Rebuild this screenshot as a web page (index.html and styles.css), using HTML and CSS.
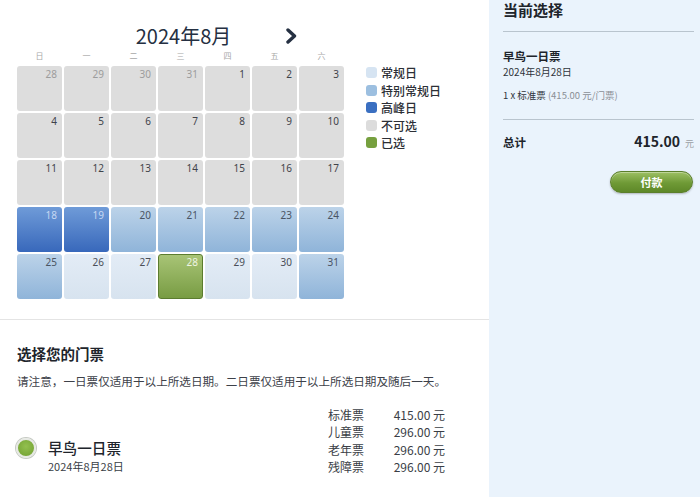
FILE: index.html
```html
<!DOCTYPE html>
<html lang="zh-CN">
<head>
<meta charset="utf-8">
<title>选择日期</title>
<link rel="stylesheet" href="styles.css">
</head>
<body>
<div class="page">
  <main class="main">
    <section class="cal-area">
      <div class="calendar">
        <div class="cal-head">
          <span></span>
          <span class="cal-title">2024年8月</span>
          <span class="next">
            <svg width="13" height="16" viewBox="0 0 13 16"><path d="M3 2 L9.5 8 L3 14" fill="none" stroke="#253042" stroke-width="3.4" stroke-linecap="round" stroke-linejoin="round"/></svg>
          </span>
        </div>
        <div class="weekdays">
          <span>日</span><span>一</span><span>二</span><span>三</span><span>四</span><span>五</span><span>六</span>
        </div>
        <div class="grid">
          <div class="cell off prev">28</div>
          <div class="cell off prev">29</div>
          <div class="cell off prev">30</div>
          <div class="cell off prev">31</div>
          <div class="cell off">1</div>
          <div class="cell off">2</div>
          <div class="cell off">3</div>
          <div class="cell off">4</div>
          <div class="cell off">5</div>
          <div class="cell off">6</div>
          <div class="cell off">7</div>
          <div class="cell off">8</div>
          <div class="cell off">9</div>
          <div class="cell off">10</div>
          <div class="cell off">11</div>
          <div class="cell off">12</div>
          <div class="cell off">13</div>
          <div class="cell off">14</div>
          <div class="cell off">15</div>
          <div class="cell off">16</div>
          <div class="cell off">17</div>
          <div class="cell peak">18</div>
          <div class="cell peak">19</div>
          <div class="cell special">20</div>
          <div class="cell special">21</div>
          <div class="cell special">22</div>
          <div class="cell special">23</div>
          <div class="cell special">24</div>
          <div class="cell special">25</div>
          <div class="cell regular">26</div>
          <div class="cell regular">27</div>
          <div class="cell selected">28</div>
          <div class="cell regular">29</div>
          <div class="cell regular">30</div>
          <div class="cell special">31</div>
        </div>
      </div>
      <ul class="legend">
        <li><i class="sw sw-regular"></i>常规日</li>
        <li><i class="sw sw-special"></i>特别常规日</li>
        <li><i class="sw sw-peak"></i>高峰日</li>
        <li><i class="sw sw-off"></i>不可选</li>
        <li><i class="sw sw-selected"></i>已选</li>
      </ul>
    </section>

    <section class="tickets">
      <h2 class="tickets-title">选择您的门票</h2>
      <p class="notice">请注意，一日票仅适用于以上所选日期。二日票仅适用于以上所选日期及随后一天。</p>
      <div class="ticket-row">
        <div class="ticket-name">
          <span class="radio"></span>
          <span class="name">早鸟一日票</span>
          <span class="date">2024年8月28日</span>
        </div>
        <dl class="prices">
          <dt>标准票</dt><dd>415.00 元</dd>
          <dt>儿童票</dt><dd>296.00 元</dd>
          <dt>老年票</dt><dd>296.00 元</dd>
          <dt>残障票</dt><dd>296.00 元</dd>
        </dl>
      </div>
    </section>
  </main>

  <aside class="summary">
    <h2 class="summary-title">当前选择</h2>
    <div class="summary-item">
      <div class="item-name">早鸟一日票</div>
      <div class="item-date">2024年8月28日</div>
      <div class="item-qty">1 x 标准票 <span class="muted">(415.00 元/门票)</span></div>
    </div>
    <div class="total">
      <span class="total-label">总计</span>
      <span class="total-value">415.00<span class="cur">元</span></span>
    </div>
    <div class="pay-row">
      <button class="pay">付款</button>
    </div>
  </aside>
</div>
</body>
</html>
```

FILE: styles.css
```css
* { box-sizing: border-box; }
html, body { margin: 0; padding: 0; }
body {
  font-family: "Noto Sans", "Noto Sans CJK SC", sans-serif;
  color: #2a2f38;
  background: #fff;
  width: 700px;
  height: 497px;
  overflow: hidden;
}
.page {
  display: flex;
  height: 497px;
}
.main {
  width: 489px;
  flex: none;
}
.cal-area {
  display: flex;
  gap: 22px;
  padding: 0 0 20px 17px;
}
.calendar { width: 327px; }
.cal-head {
  display: grid;
  grid-template-columns: 1fr auto 1fr;
  align-items: center;
  height: 49px;
  padding-top: 22px;
}
.cal-title {
  font-family: "Noto Sans CJK SC", sans-serif;
  font-size: 20px;
  line-height: 26px;
  color: #253042;
  padding-left: 6px;
}
.next {
  display: flex;
  padding-left: 54px;
  padding-top: 1px;
}
.weekdays {
  display: grid;
  grid-template-columns: repeat(7, 45px);
  column-gap: 2px;
  height: 14px;
  margin-bottom: 3px;
  font-family: "Noto Sans CJK SC", sans-serif;
  font-size: 8px;
  line-height: 14px;
  color: #a8a8a8;
  text-align: center;
}
.grid {
  display: grid;
  grid-template-columns: repeat(7, 45px);
  grid-auto-rows: 45px;
  gap: 2px;
}
.cell {
  border-radius: 3px;
  text-align: right;
  padding: 1px 5px 0 0;
  font-size: 10px;
  line-height: 14px;
  color: #4a4f57;
}
.off { background: #dddddd; color: #3f434a; }
.prev { color: #9c9c9c; }
.regular { background: linear-gradient(#e3ecf6, #d7e3ef); color: #4a4f57; }
.special { background: linear-gradient(#bcd3e9, #8fb4d9); color: #4a5563; }
.peak { background: linear-gradient(#6f9bd8, #3868bb); color: #c6d8f2; }
.selected {
  background: linear-gradient(#a8c476, #789c43);
  border: 1px solid #5b7c2f;
  color: #eef4e2;
  padding: 0 4px 0 0;
}
.legend {
  list-style: none;
  margin: 0;
  padding: 64px 0 0;
  font-family: "Noto Sans CJK SC", sans-serif;
  font-size: 12px;
  font-weight: 500;
  line-height: 17.5px;
  color: #2c2f36;
}
.legend li {
  display: flex;
  align-items: center;
  gap: 4px;
}
.sw {
  display: inline-block;
  width: 11px;
  height: 11px;
  border-radius: 3px;
}
.sw-regular { background: #d6e4f2; }
.sw-special { background: #9cbfe0; }
.sw-peak { background: #3a6fc1; }
.sw-off { background: #dcdcdc; }
.sw-selected { background: #76a03e; }

.tickets {
  border-top: 1px solid #e4e4e4;
  padding: 24px 44px 0 16px;
  font-family: "Noto Sans CJK SC", sans-serif;
}
.tickets-title {
  margin: 0 0 0 1px;
  font-size: 14.5px;
  line-height: 20px;
  font-weight: 700;
  color: #20242b;
}
.notice {
  margin: 9px -40px 0 1px;
  font-size: 11.6px;
  line-height: 16px;
  color: #3d4149;
  white-space: nowrap;
}
.ticket-row {
  display: flex;
  justify-content: space-between;
  align-items: flex-end;
  margin-top: 17px;
}
.ticket-name {
  display: grid;
  grid-template-columns: 20px auto;
  column-gap: 12px;
  align-items: center;
  padding-bottom: 2px;
}
.radio {
  width: 20px;
  height: 20px;
  border-radius: 50%;
  background: radial-gradient(circle at 50% 40%, #93c04f, #6f9f2f);
  border: 2px solid #e6e9e3;
  box-shadow: 0 0 0 1px #c6cac3;
}
.name {
  font-size: 14.6px;
  line-height: 20px;
  font-weight: 500;
  color: #20242b;
}
.date {
  grid-column: 2;
  font-size: 11px;
  line-height: 16px;
  color: #3a3e46;
}
.prices {
  display: grid;
  grid-template-columns: 36px 81px;
  margin: 0;
  font-size: 12px;
  line-height: 17.4px;
  color: #3a3e46;
}
.prices dt { margin: 0; }
.prices dd { margin: 0; text-align: right; }

.summary {
  flex: 1;
  background: #eaf3fc;
  padding: 0 6px 0 14px;
  font-family: "Noto Sans CJK SC", sans-serif;
}
.summary-title {
  margin: 0;
  font-size: 15px;
  line-height: 19px;
  font-weight: 700;
  color: #20242b;
  padding-bottom: 12px;
  border-bottom: 1px solid #b9c4ce;
}
.summary-item {
  padding: 16px 0 17px;
  border-bottom: 1px solid #b9c4ce;
}
.item-name {
  font-size: 11.5px;
  line-height: 16px;
  font-weight: 700;
  color: #20242b;
}
.item-date {
  margin-top: 1px;
  font-size: 10px;
  line-height: 14px;
  color: #30343b;
}
.item-qty {
  margin-top: 9px;
  font-size: 9.5px;
  line-height: 14px;
  color: #30343b;
}
.muted { color: #8a8f96; }
.total {
  display: flex;
  justify-content: space-between;
  align-items: baseline;
  margin-top: 11px;
  line-height: 20px;
}
.total-label {
  font-size: 11.5px;
  font-weight: 700;
  color: #20242b;
}
.total-value {
  font-size: 14px;
  font-weight: 700;
  color: #20242b;
}
.cur {
  font-size: 9px;
  font-weight: 400;
  color: #9a9ea4;
  margin-left: 5px;
}
.pay-row {
  display: flex;
  justify-content: flex-end;
  margin-top: 17px;
  padding-right: 1px;
}
.pay {
  width: 83px;
  height: 22px;
  border-radius: 11px;
  border: 1px solid #5b7f2b;
  background: linear-gradient(#9dc064, #6f9a36 55%, #5e8828);
  box-shadow: 0 1px 2px rgba(0,0,0,0.25), inset 0 1px 0 rgba(255,255,255,0.35);
  color: #fff;
  font-family: "Noto Sans CJK SC", sans-serif;
  font-size: 11px;
  font-weight: 700;
  line-height: 20px;
  padding: 0;
}
```
